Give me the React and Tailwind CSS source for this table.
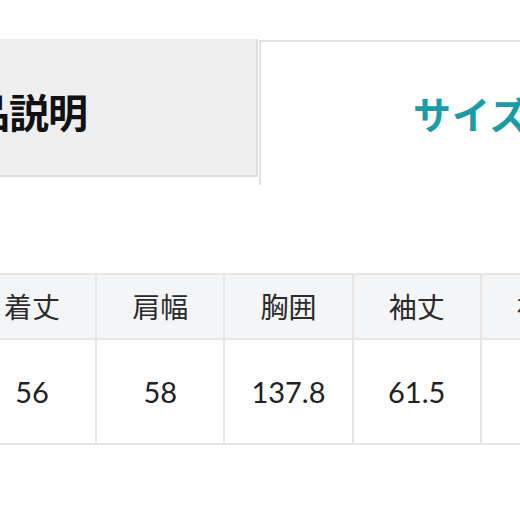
import React from 'react';

const HEADERS = ['着丈', '肩幅', '胸囲', '袖丈', '裄丈'];
const VALUES = ['56', '58', '137.8', '61.5', '79'];

const font = { fontFamily: 'Lato, "Noto Sans CJK JP", sans-serif' };

export default function App() {
  return (
    <div className="w-[520px] h-[520px] overflow-hidden bg-white" style={font}>
      {/* tabs */}
      <div className="flex items-start pt-[39px]">
        <div className="ml-[-210px] w-[468px] h-[138px] shrink-0 bg-[#efefef] border-r-2 border-b-2 border-[#dedede] flex items-center justify-center pt-[8px]">
          <span className="text-[40px] font-bold text-[#111] tracking-[-1px] mr-[28px]" style={{ fontFamily: '"Noto Sans CJK JP", sans-serif' }}>
            商品説明
          </span>
        </div>
        <div className="ml-[1px] mt-[1px] w-[470px] h-[145px] shrink-0 bg-white border-t-2 border-l-2 border-[#e2e2e2] flex items-start pl-[152px] pt-[42px]">
          <span className="text-[38px] font-bold text-[#1a9ca6] tracking-[1px]" style={{ fontFamily: '"Noto Sans CJK JP", sans-serif' }}>
            サイズ表
          </span>
        </div>
      </div>

      {/* size table */}
      <div className="mt-[88px] ml-[-33px] w-[660px]">
        <table className="border-collapse table-fixed w-[643px]">
          <tbody>
            <tr className="bg-[#f3f5f7]">
              {HEADERS.map((h) => (
                <td
                  key={h}
                  className="h-[65px] border-2 border-[#e6e6e6] text-center text-[28px] text-[#2b2b2b] p-0 align-middle"
                >
                  {h}
                </td>
              ))}
            </tr>
            <tr className="bg-white">
              {VALUES.map((v, i) => (
                <td
                  key={i}
                  className="h-[105px] border-2 border-[#e6e6e6] text-center text-[29px] text-[#222] p-0 align-middle"
                >
                  {v}
                </td>
              ))}
            </tr>
          </tbody>
        </table>
      </div>
    </div>
  );
}
